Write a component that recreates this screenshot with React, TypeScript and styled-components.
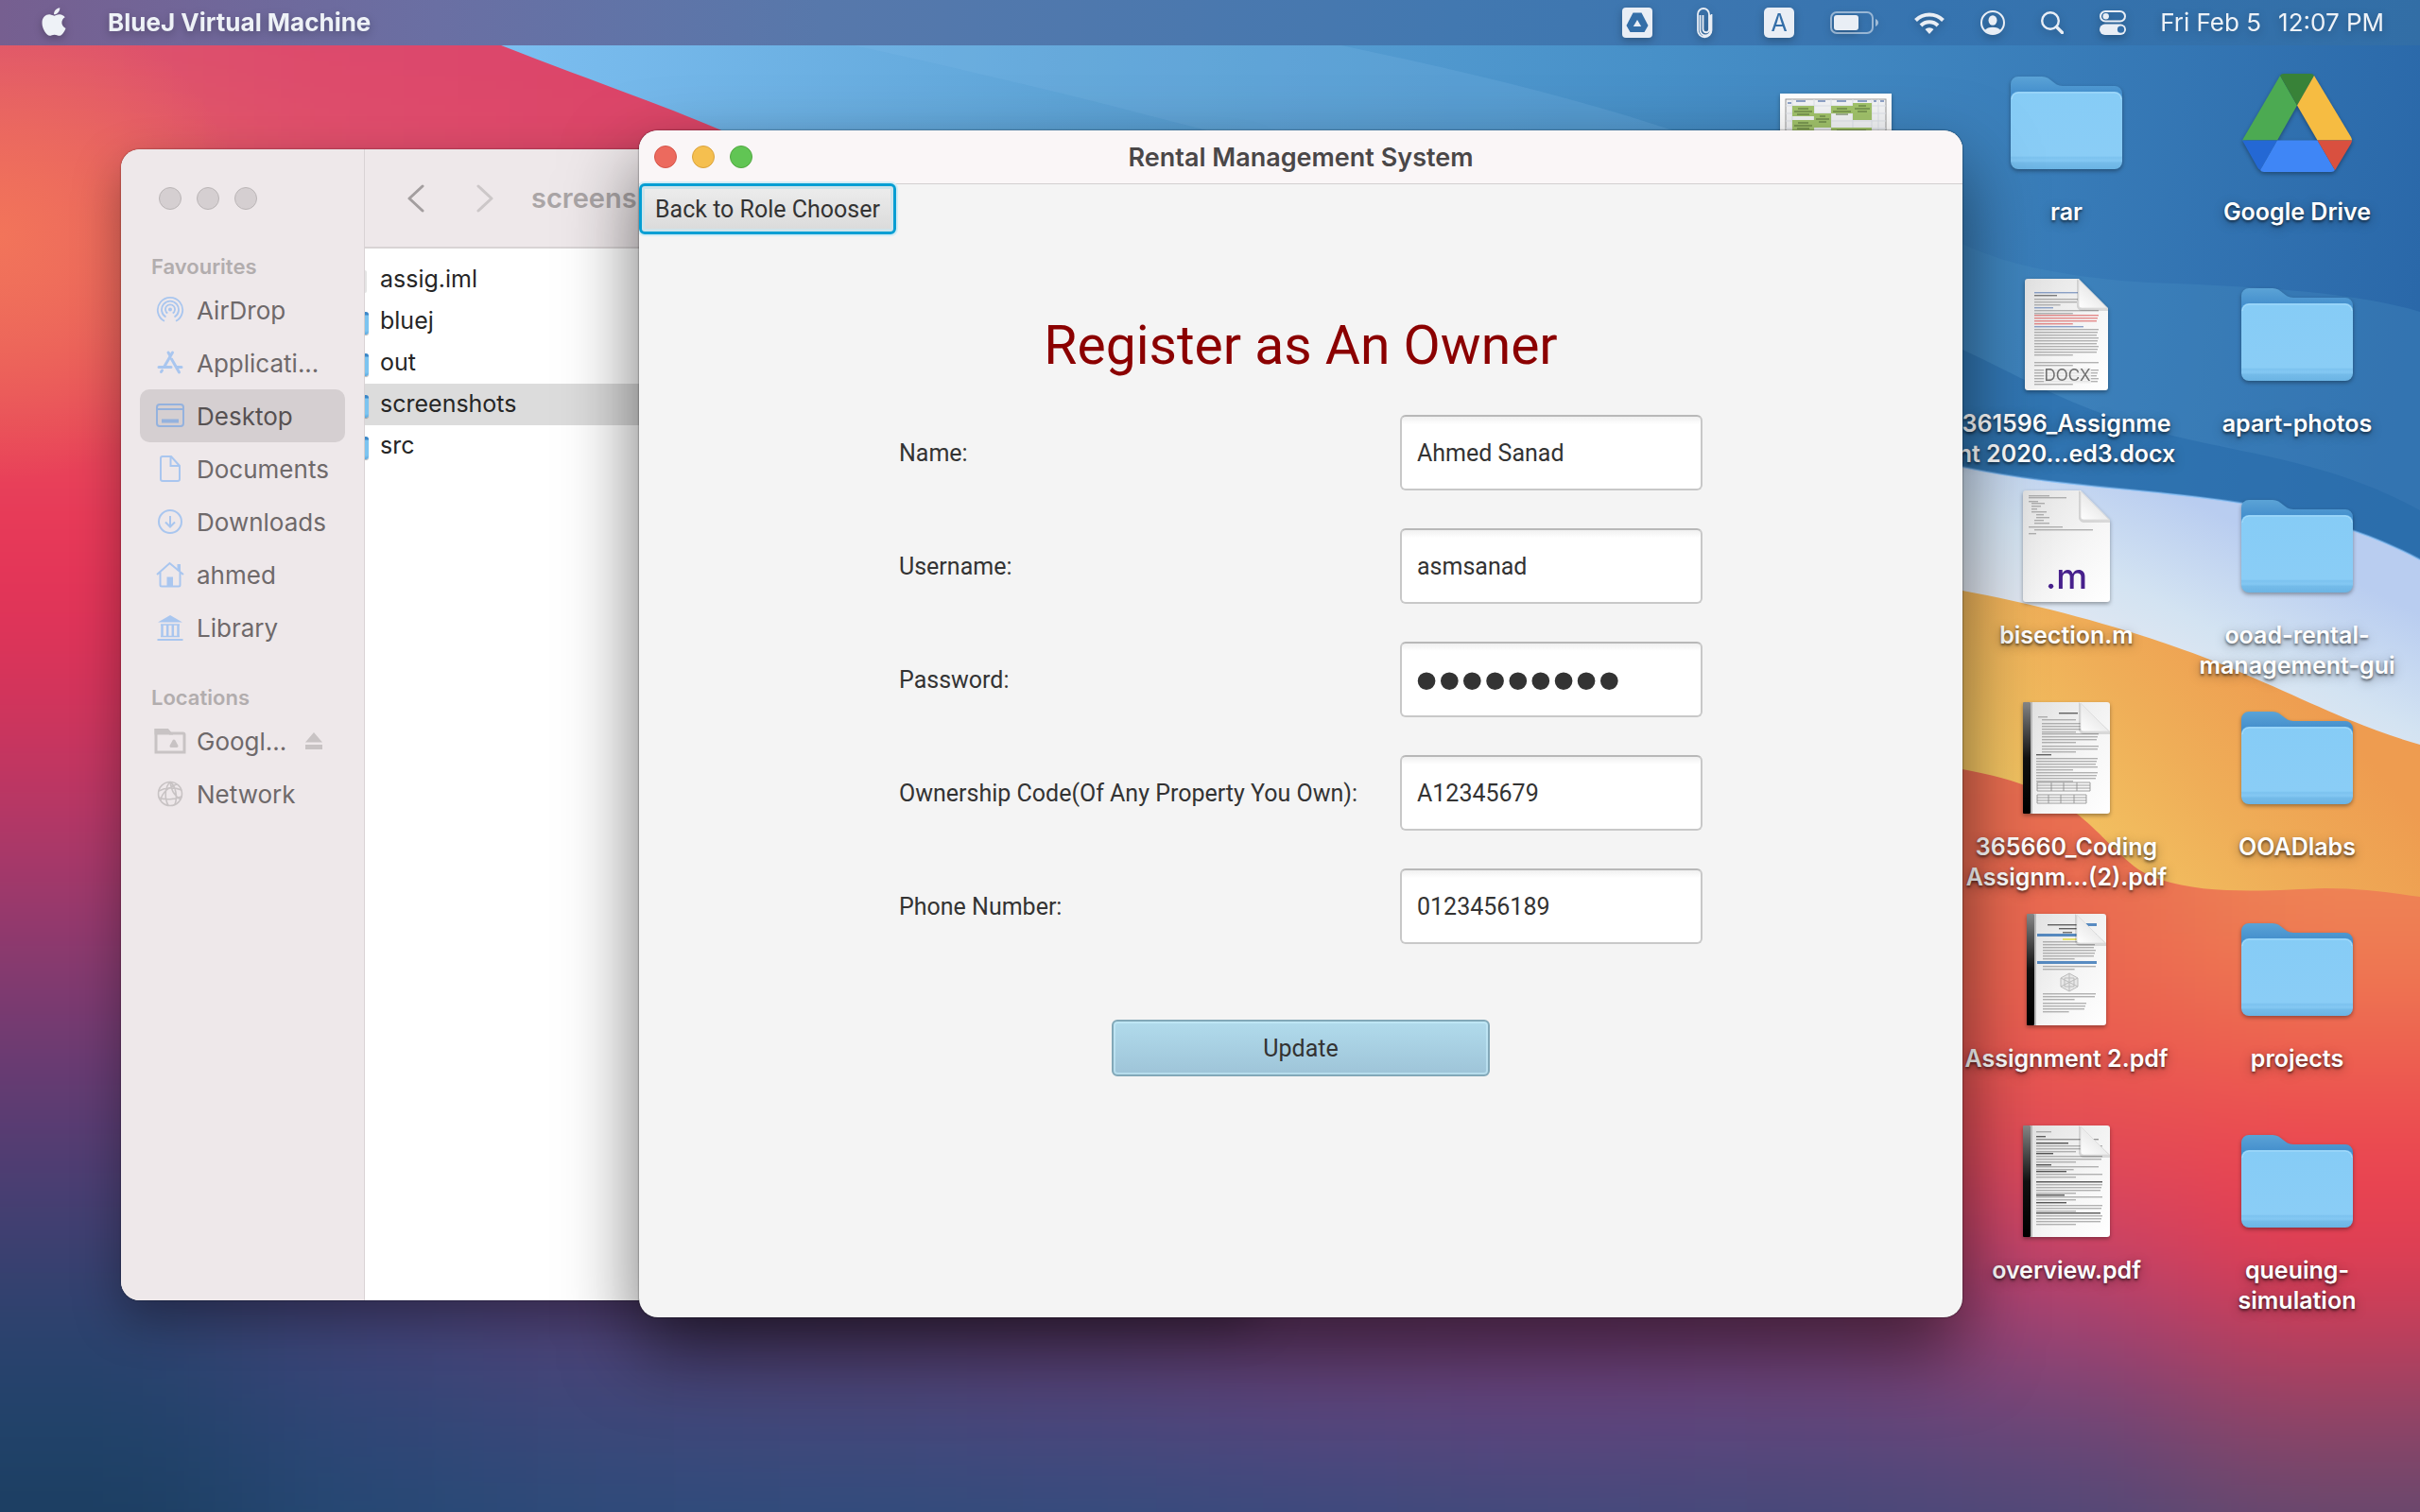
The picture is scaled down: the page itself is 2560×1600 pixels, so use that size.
import React from "react";
import styled, { createGlobalStyle, css } from "styled-components";
import { FaApple } from "react-icons/fa";

const GlobalStyle = createGlobalStyle`
  *, *::before, *::after { box-sizing: border-box; }
  body { margin: 0; overflow: hidden; font-family: Inter, "Liberation Sans", sans-serif; }
  button, input { font: inherit; color: inherit; }
  ul { list-style: none; margin: 0; padding: 0; }
  h1, h2, p { margin: 0; font-size: inherit; font-weight: inherit; }
  a { color: inherit; text-decoration: none; }
`;

/* ---------- Wallpaper ---------- */

const MESH = [
  ["#dc506e", "#dc486c", "#dc446a", "#dc446a", "#d84468", "#d84468", "#d84468", "#d84468", "#d84468", "#d84468"],
  ["#e8665c", "#e0526a", "#dc4a66", "#d84660", "#d84660", "#d84660", "#d84660", "#d84660", "#d84660", "#d84660"],
  ["#e6525a", "#e04a5c", "#d84660", "#d84660", "#d84660", "#d84660", "#d84660", "#d84660", "#d84660", "#d84660"],
  ["#ea3558", "#e03a5a", "#d84660", "#d84660", "#d84660", "#d84660", "#d84660", "#d84660", "#e87050", "#ea8055"],
  ["#d83358", "#d83a5a", "#d84660", "#d84660", "#d84660", "#d84660", "#d84660", "#e86a50", "#e87050", "#ea8055"],
  ["#b03868", "#b83860", "#c03860", "#c84060", "#d84660", "#d84660", "#d84660", "#e86a50", "#e86c50", "#ee8a58"],
  ["#803a70", "#803a70", "#8c3a70", "#a03a68", "#b03c68", "#c84060", "#d84660", "#e86450", "#ea6650", "#ee7850"],
  ["#553c74", "#603c72", "#703c70", "#803c70", "#903c70", "#a03c70", "#b84068", "#d84858", "#e84a50", "#ec4650"],
  ["#33416f", "#4a3f74", "#5a3e74", "#683c70", "#743c70", "#883c74", "#8c3c78", "#983f7c", "#c03f70", "#e43a52"],
  ["#20446c", "#2f4678", "#3c487a", "#42487c", "#4a477e", "#54467e", "#5c457e", "#5c467c", "#684678", "#8c4468"],
  ["#1a3b5c", "#214a72", "#264c7a", "#284e7c", "#2a4e7c", "#304c7c", "#364c7a", "#3c4a78", "#444a78", "#544a70"],
];

const WallpaperSvg = styled.svg`
  position: absolute;
  inset: 0;
  width: 100%;
  height: 100%;
  z-index: -1;
`;

function Wallpaper() {
  return (
    <WallpaperSvg viewBox="0 0 2560 1600" preserveAspectRatio="xMidYMid slice" aria-hidden="true">
      <defs>
        <filter id="soft" x="-20%" y="-20%" width="140%" height="140%" colorInterpolationFilters="sRGB">
          <feGaussianBlur stdDeviation="85" />
        </filter>
        <linearGradient id="sky" x1="500" y1="0" x2="2560" y2="300" gradientUnits="userSpaceOnUse">
          <stop offset="0" stopColor="#7ec0f2" />
          <stop offset="0.3" stopColor="#5fa5d8" />
          <stop offset="0.6" stopColor="#4790c8" />
          <stop offset="0.8" stopColor="#397db9" />
          <stop offset="1" stopColor="#2a68a9" />
        </linearGradient>
        <linearGradient id="lav" x1="2300" y1="520" x2="2200" y2="720" gradientUnits="userSpaceOnUse">
          <stop offset="0" stopColor="#b9cdf0" />
          <stop offset="0.5" stopColor="#d3e3f2" />
          <stop offset="1" stopColor="#e8eaf2" />
        </linearGradient>
        <linearGradient id="sun" x1="2180" y1="900" x2="2420" y2="700" gradientUnits="userSpaceOnUse">
          <stop offset="0" stopColor="#f3c462" />
          <stop offset="0.5" stopColor="#efae58" />
          <stop offset="1" stopColor="#ee9c50" />
        </linearGradient>
        <radialGradient id="glow" cx="0" cy="250" r="260" gradientUnits="userSpaceOnUse">
          <stop offset="0" stopColor="#f2745a" />
          <stop offset="1" stopColor="#f2745a" stopOpacity="0" />
        </radialGradient>
      </defs>
      <g filter="url(#soft)">
        {MESH.map((row, r) =>
          row.map((fill, c) => (
            <rect
              key={`${r}-${c}`}
              x={c === 0 ? -400 : c * 256}
              y={r === 0 ? -300 : r * 160 - (r > 8 ? 20 : 0)}
              width={c === 0 || c === 9 ? 660 : 260}
              height={r === 0 || r === 10 ? 484 : 164}
              fill={fill}
            />
          ))
        )}
      </g>
      <rect width="400" height="560" fill="url(#glow)" />
      <path d="M1900 780C2000 800 2060 808 2076 814C2200 836 2210 880 2262 920C2310 950 2400 942 2460 940C2500 940 2530 945 2560 949V560H1900Z" fill="url(#sun)" />
      <path d="M1900 590C2000 610 2060 620 2076 625C2160 640 2260 668 2330 695C2420 730 2480 765 2560 788V420H1900Z" fill="url(#lav)" />
      <path d="M500 36C620 84 700 110 768 140C1100 290 1500 420 2076 494C2180 516 2270 516 2370 532C2450 545 2510 565 2560 592V0H500Z" fill="url(#sky)" />
      <path d="M2076 494C2180 516 2270 516 2370 532C2450 545 2510 565 2560 592" fill="none" stroke="#8cc0f4" strokeWidth="2" />
      <path d="M820 30C1100 90 1400 160 1800 300L2000 240C1850 150 1650 95 1380 40V30Z" fill="#7fbcea" opacity="0.22" />
      <path d="M2076 258C2130 285 2220 298 2300 300C2420 305 2500 312 2560 330V592C2510 565 2450 545 2370 532C2270 516 2180 516 2076 494Z" fill="#4b92c6" opacity="0.28" />
      <path d="M2076 370C2130 395 2180 425 2260 450C2350 480 2450 480 2560 540V592C2510 565 2450 545 2370 532C2270 516 2180 516 2076 494Z" fill="#2467a8" opacity="0.5" />
    </WallpaperSvg>
  );
}

/* ---------- Menu bar ---------- */

const MenuBar = styled.header`
  display: flex;
  align-items: center;
  height: 48px;
  padding: 0 38px 2px 40px;
  color: #eef2f7;
  font-size: 26px;
  background: linear-gradient(90deg, #765f90 0%, #6a6fa3 18%, #5778ab 34%, #4278b0 60%, #3674b0 80%, #326ea6 100%);
  svg, span, strong { filter: drop-shadow(0 3px 4px rgba(0, 0, 0, 0.25)); }
`;
const AppName = styled.strong`
  margin-left: 40px;
  font-weight: 700;
`;
const AppleButton = styled.button`
  display: flex;
  width: 34px;
  justify-content: center;
  padding: 0;
  border: 0;
  background: none;
`;
const Tray = styled.div`
  display: flex;
  align-items: center;
  gap: 38px;
  margin-left: auto;
  padding-top: 2px;
  svg { display: block; }
`;
const Clock = styled.div`
  display: flex;
  gap: 18px;
  margin-left: 36px;
`;

function TrayIcons() {
  const c = "#e9eef5";
  return (
    <Tray>
      <svg width="32" height="32" viewBox="0 0 32 32">
        <rect width="32" height="32" rx="4" fill={c} />
        <path d="M11.500 5.500h9L27.500 19l-4 7h-15l-4-7z" fill="#336ea8" />
        <path d="M16 13l4.200 7h-8.400z" fill={c} />
      </svg>
      <svg width="42" height="34" viewBox="6 0 42 34" fill="none" stroke={c} strokeWidth="1.800">
        <path d="M18.500 9v16a5.500 5.500 0 0 0 11 0V9M30.500 8v17a7.200 7.200 0 0 1-14.500 0V8a6 6 0 0 1 12 0v16a3 3 0 0 1-6.500 0V9" />
      </svg>
      <svg width="32" height="32" viewBox="0 0 32 32">
        <rect width="32" height="32" rx="5" fill={c} />
        <text x="16" y="25" textAnchor="middle" fontSize="25" fontFamily="Inter, sans-serif" fill="#336ea8">A</text>
      </svg>
      <svg width="51" height="24" viewBox="0 0 51 24">
        <rect x="1" y="1" width="44" height="22" rx="6" fill="none" stroke={c} strokeOpacity="0.55" strokeWidth="2" />
        <rect x="4" y="4" width="26" height="16" rx="3" fill={c} />
        <path d="M48 8c4 1.500 4 6.500 0 8z" fill={c} fillOpacity="0.6" />
      </svg>
      <svg width="32" height="24" viewBox="0 0 32 24" fill="none" stroke={c} strokeWidth="4">
        <path d="M1.500 9.500a20.500 20.500 0 0 1 29 0" />
        <path d="M7 15a12.700 12.700 0 0 1 18 0" />
        <path d="M11.500 19a6.400 6.400 0 0 1 9 0L16 24z" fill={c} stroke="none" />
      </svg>
      <svg width="26" height="26" viewBox="0 0 26 26">
        <circle cx="13" cy="13" r="12" fill="none" stroke={c} strokeWidth="2" />
        <ellipse cx="13" cy="10.500" rx="4.500" ry="5.200" fill={c} />
        <path d="M4.500 21c3-4.500 14-4.500 17 0a12 12 0 0 1-17 0z" fill={c} />
      </svg>
      <svg width="24" height="24" viewBox="0 0 24 24" fill="none" stroke={c}>
        <circle cx="10" cy="10" r="8.800" strokeWidth="2.400" />
        <path d="M16.500 16.500l6 6" strokeWidth="3.400" strokeLinecap="round" />
      </svg>
      <svg width="28" height="26" viewBox="0 0 28 26">
        <rect x="1" y="1" width="26" height="10.500" rx="5.250" fill="none" stroke={c} strokeWidth="2" />
        <circle cx="6.700" cy="6.200" r="3.200" fill={c} />
        <rect y="14.500" width="28" height="11.500" rx="5.750" fill={c} />
        <circle cx="22.500" cy="20.200" r="3.600" fill="#336ea8" />
      </svg>
    </Tray>
  );
}

/* ---------- Desktop icons ---------- */

const Screen = styled.div`
  position: relative;
  z-index: 0;
  min-height: 100vh;
  overflow: hidden;
`;
const IconGrid = styled.main`
  display: flex;
  justify-content: flex-end;
  padding: 18px 8px 0 0;
`;
const IconColumn = styled.ul`
  width: 244px;
`;
const IconItem = styled.li`
  display: flex;
  flex-direction: column;
  align-items: center;
  height: 224px;
`;
const IconArt = styled.div`
  display: flex;
  align-items: center;
  justify-content: center;
  width: 128px;
  height: 128px;
  margin-bottom: 14px;
  svg { display: block; filter: drop-shadow(0 2px 2px rgba(0, 0, 0, 0.35)); }
`;
const IconLabel = styled.span`
  color: #fff;
  font-size: 25px;
  font-weight: 600;
  line-height: 32px;
  text-align: center;
  white-space: pre;
  text-shadow: 0 2px 3px rgba(0, 0, 0, 0.55), 0 3px 12px rgba(0, 0, 0, 0.35);
`;

const Folder = () => (
  <svg width="118" height="98" viewBox="0 0 118 98">
    <defs>
      <linearGradient id="back" x1="0" y1="0" x2="0" y2="1">
        <stop offset="0" stopColor="#5ba3d6" />
        <stop offset="1" stopColor="#2f7cc4" />
      </linearGradient>
      <linearGradient id="front" x1="0" y1="0" x2="0" y2="1">
        <stop offset="0" stopColor="#86ccf6" />
        <stop offset="0.830" stopColor="#8acdf6" />
        <stop offset="0.850" stopColor="#7cc2ef" />
        <stop offset="0.890" stopColor="#84c8f3" />
        <stop offset="0.920" stopColor="#74bbe9" />
        <stop offset="1" stopColor="#6bb4e4" />
      </linearGradient>
    </defs>
    <path d="M0 8a8 8 0 0 1 8-8h25c10 0 12 10 22 10h55a8 8 0 0 1 8 8v16H0z" fill="url(#back)" />
    <path d="M0 32V24a8 8 0 0 1 8-8h102a8 8 0 0 1 8 8v66a8 8 0 0 1-8 8H8a8 8 0 0 1-8-8z" fill="url(#front)" />
    <path d="M1 24a8 8 0 0 1 7-7h102a8 8 0 0 1 7 7" fill="none" stroke="#a8dcfb" strokeWidth="1" />
  </svg>
);

const DriveLogo = () => (
  <svg width="116" height="104" viewBox="0 0 116 104">
    <path d="M40 2L58 33.500 37 70.500H0z" fill="#4caa52" />
    <path d="M40 2Q41 0 44 0H72Q75 0 76 2L58 33.500z" fill="#388238" />
    <path d="M76 2L115 67Q116 69 116 70.500H79.500L58 33.500z" fill="#f6bc42" />
    <path d="M0 70.500H37L19 102Q17 101 16 99z" fill="#2468d4" />
    <path d="M37 70.500H79.500L98 102Q97 104 94 104H23Q20 104 19 102z" fill="#3f86f6" />
    <path d="M79.500 70.500H116Q116 72 115 74L100 99Q99 101 98 102z" fill="#d9503f" />
  </svg>
);

type Line = { y: number; x?: number; w: number; c?: string; h?: number };
const block = (from: number, count: number, w: number, c?: string, x?: number): Line[] =>
  Array.from({ length: count }, (_, i) => ({ y: from + i * 3, w: i === count - 1 ? w * 0.6 : w - (i % 3), c, x }));

const DOCS: Record<string, { width: number; bound?: boolean; lines: Line[] }> = {
  docx: {
    width: 88,
    lines: [
      { y: 14, x: 10, w: 46, c: "#6a86b8" }, { y: 17, x: 10, w: 24, c: "#555" },
      ...block(21, 3, 46), { y: 30, x: 10, w: 20, c: "#6a86b8" },
      ...block(33, 2, 68), ...block(38, 4, 68, "#d66"),
      { y: 50, x: 10, w: 52, c: "#6a86b8" }, ...block(53, 10, 68), ...block(88, 2, 68),
      ...block(96, 6, 68),
    ],
  },
  m: {
    width: 92,
    lines: [
      { y: 5, x: 6, w: 22 }, { y: 7, x: 6, w: 40 }, { y: 11, x: 6, w: 10 }, { y: 13, x: 9, w: 14 },
      { y: 16, x: 9, w: 10 }, { y: 19, x: 9, w: 6 }, { y: 22, x: 9, w: 16 }, { y: 25, x: 14, w: 8 },
      { y: 28, x: 14, w: 14 }, { y: 31, x: 12, w: 10 }, { y: 34, x: 12, w: 16 }, { y: 38, x: 6, w: 36 },
      { y: 41, x: 12, w: 62 }, { y: 45, x: 6, w: 8 },
    ],
  },
  coding: {
    width: 92, bound: true,
    lines: [
      { y: 11, x: 38, w: 20, c: "#333" }, { y: 15, x: 16, w: 10 }, ...block(18, 1, 60, undefined, 20), ...block(22, 4, 60, undefined, 20),
      ...block(33, 4, 60, undefined, 20), ...block(46, 3, 60, undefined, 20), { y: 55, x: 14, w: 16, c: "#333" },
      ...block(59, 5, 65, undefined, 14), ...block(74, 4, 65, undefined, 14),
    ],
  },
  assignment: {
    width: 84, bound: true,
    lines: [
      { y: 11, x: 22, w: 34, c: "#333" }, { y: 15, x: 34, w: 20, c: "#333" }, { y: 10, x: 60, w: 14, c: "#2468b0", h: 3 },
      { y: 19, x: 38, w: 10, c: "#444" }, { y: 21, x: 11, w: 63, c: "#2468b0", h: 3 }, { y: 26, x: 38, w: 16, c: "#e4de40", h: 2 },
      ...block(29, 7, 56, undefined, 17), { y: 50, x: 11, w: 63, c: "#2468b0", h: 3 }, ...block(55, 2, 56, undefined, 17),
      ...block(84, 3, 56, undefined, 17), ...block(94, 4, 46, undefined, 17),
    ],
  },
  overview: {
    width: 92, bound: true,
    lines: [
      { y: 6, x: 14, w: 16 }, { y: 11, x: 14, w: 10, c: "#333" }, { y: 14, x: 14, w: 66, c: "#777" },
      { y: 18, x: 14, w: 34, c: "#222" }, ...block(21, 3, 70, undefined, 14), { y: 29, x: 14, w: 18, c: "#222" },
      ...block(32, 3, 70, undefined, 14), { y: 41, x: 14, w: 16, c: "#222" }, ...block(43, 2, 66, undefined, 14),
      { y: 48, x: 14, w: 32, c: "#222" }, ...block(51, 2, 70, undefined, 14), { y: 59, x: 14, w: 70, c: "#222" },
      ...block(62, 4, 70, undefined, 14), { y: 73, x: 14, w: 30, c: "#222" }, ...block(75, 2, 70, undefined, 14),
      { y: 81, x: 14, w: 32, c: "#222" }, ...block(84, 3, 70, undefined, 14), { y: 92, x: 14, w: 68, c: "#222" },
      ...block(95, 4, 70, undefined, 14),
    ],
  },
};

function DocIcon({ kind }: { kind: keyof typeof DOCS }) {
  const { width: w, bound, lines } = DOCS[kind];
  const fold = 31;
  const paper = bound
    ? `M2 0H${w - 3}Q${w} 0 ${w} 3V115Q${w} 118 ${w - 3} 118H2Z`
    : `M3 0H${w - fold}L${w} ${fold}V115Q${w} 118 ${w - 3} 118H3Q0 118 0 115V3Q0 0 3 0Z`;
  return (
    <svg width={w} height="118" viewBox={`0 0 ${w} 118`}>
      <defs>
        <linearGradient id="paper" x1="0" y1="0" x2="1" y2="1">
          <stop offset="0" stopColor="#e2e2e2" />
          <stop offset="0.600" stopColor="#f6f6f6" />
          <stop offset="1" stopColor="#fff" />
        </linearGradient>
        <linearGradient id="curl" x1="0" y1="1" x2="0.600" y2="0.300">
          <stop offset="0" stopColor="#fff" />
          <stop offset="1" stopColor="#e6e6e6" />
        </linearGradient>
        <linearGradient id="spine" x1="0" y1="0" x2="0" y2="1">
          <stop offset="0" stopColor="#888" />
          <stop offset="0.500" stopColor="#111" />
          <stop offset="1" stopColor="#000" />
        </linearGradient>
      </defs>
      <path d={paper} fill="url(#paper)" />
      {lines.map((l, i) => (
        <rect key={i} x={l.x ?? 10} y={l.y} width={l.w} height={l.h ?? 1.4} fill={l.c ?? "#9a9a9a"} opacity="0.75" />
      ))}
      {kind === "coding" && (
        <path d="M15 85h56v9H15zM15 88h56M15 91h56M30 85v9M43 85v9M57 85v9M15 98h52v9H15zM15 101h52M15 104h52M27 98v9M40 98v9M54 98v9" fill="none" stroke="#888" strokeWidth="0.800" />
      )}
      {kind === "assignment" && (
        <path d="M45 63l9 5v9l-9 5-9-5v-9zM36 68l18 9M54 68l-18 9M45 63v19M40 68h10v9h-10z" fill="#e8e8e8" stroke="#bbb" />
      )}
      {kind === "docx" && <rect x="20" y="94" width="50" height="17" fill="#f2f2f2" opacity="0.8" />}
      {kind === "docx" && (
        <text x="45" y="108" textAnchor="middle" fontSize="17" fontFamily="Inter, sans-serif" fill="#707070">DOCX</text>
      )}
      {kind === "m" && (
        <text x="46" y="104" textAnchor="middle" fontSize="37" fontWeight="500" fontFamily="Inter, sans-serif" fill="#47208c">.m</text>
      )}
      <path d={`M${w - fold - 2} 0V${fold - 1}Q${w - fold} ${fold + 3} ${w - fold + 3} ${fold + 3}H${w}V${fold}Z`} fill="#000" opacity="0.12" />
      <path d={`M${w - fold} 1V${fold - 3}Q${w - fold} ${fold} ${w - fold + 3} ${fold}H${w - 1}Z`} fill="url(#curl)" stroke="#dcdcdc" strokeWidth="0.800" />
      {bound && <rect width="8" height="118" rx="1" fill="url(#spine)" />}
      {bound && <rect x="8" width="2" height="118" fill="#bbb" />}
    </svg>
  );
}

const SCHEDULE_CELLS = [
  [13, 13, 23, 11], [36, 21, 18, 15], [54, 13, 23, 8], [77, 10, 20, 18], [13, 28, 23, 18], [54, 36, 43, 10],
];
const ScheduleThumb = () => (
  <svg width="118" height="62" viewBox="0 0 118 62">
    <rect width="118" height="62" fill="#fff" />
    <rect x="6" y="6" width="106" height="50" fill="#f5f6f8" stroke="#999" />
    <path d="M13 6v50M36 6v50M54 6v50M77 6v50M97 6v50M104 6v50M6 13h106M6 21h106M6 29h106M6 37h106" stroke="#dfe3ea" />
    {SCHEDULE_CELLS.map(([x, y, w, h], i) => (
      <g key={i}>
        <rect x={x} y={y} width={w} height={h} fill="#a3c56c" />
        <path d={`M${x + 6} ${y + 3}h${w - 12}M${x + 2} ${y + 6}h${w - 4}M${x + 5} ${y + 9}h${w - 10}`} stroke="#56703a" />
      </g>
    ))}
    <path d="M17 8h10M40 8h8M60 8h10M82 8h10M99 8h3M106 8h4M8 10h4" stroke="#8fa3c8" strokeWidth="2" />
  </svg>
);

type DesktopItem = { label: string; art: React.ReactNode };
const COLUMNS: DesktopItem[][] = [
  [{ label: "", art: <ScheduleThumb /> }],
  [
    { label: "rar", art: <Folder /> },
    { label: "361596_Assignme\nnt 2020...ed3.docx", art: <DocIcon kind="docx" /> },
    { label: "bisection.m", art: <DocIcon kind="m" /> },
    { label: "365660_Coding\nAssignm...(2).pdf", art: <DocIcon kind="coding" /> },
    { label: "Assignment 2.pdf", art: <DocIcon kind="assignment" /> },
    { label: "overview.pdf", art: <DocIcon kind="overview" /> },
  ],
  [
    { label: "Google Drive", art: <DriveLogo /> },
    { label: "apart-photos", art: <Folder /> },
    { label: "ooad-rental-\nmanagement-gui", art: <Folder /> },
    { label: "OOADlabs", art: <Folder /> },
    { label: "projects", art: <Folder /> },
    { label: "queuing-\nsimulation", art: <Folder /> },
  ],
];

/* ---------- Windows ---------- */

const windowBase = css`
  position: absolute;
  overflow: hidden;
  border-radius: 20px;
`;
const Lights = styled.div`
  display: flex;
  gap: 16px;
`;
const Light = styled.button<{ $fill: string; $edge: string }>`
  width: 24px;
  height: 24px;
  padding: 0;
  border: 1px solid ${(p) => p.$edge};
  border-radius: 50%;
  background: ${(p) => p.$fill};
`;

const FinderWindow = styled.section`
  ${windowBase}
  left: 128px;
  top: 158px;
  width: 1200px;
  height: 1218px;
  display: flex;
  background: #fff;
  box-shadow: 0 0 2px rgba(0, 0, 0, 0.5), 0 20px 50px rgba(0, 0, 0, 0.35);
`;
const Sidebar = styled.nav`
  width: 258px;
  padding: 40px 20px;
  background: #eee8ea;
  border-right: 1px solid #d9d3d5;
  color: #6e696a;
  font-size: 26px;
  ${Lights} { padding-left: 20px; margin-bottom: 44px; }
`;
const SideHeading = styled.h2`
  padding-left: 12px;
  font-size: 22px;
  font-weight: 600;
  line-height: 32px;
  color: #b2adae;
  ul + & { margin-top: 30px; }
  & + ul { margin-top: 2px; }
`;
const SideLink = styled.a<{ $active?: boolean }>`
  display: flex;
  align-items: center;
  gap: 11px;
  height: 56px;
  padding-left: 15px;
  border-radius: 10px;
  ${(p) => p.$active && css`background: #d5cfd1; color: #565152;`}
  & > svg { margin-left: auto; margin-right: 24px; }
`;
const SideIcon = styled.span`
  display: flex;
  flex: none;
  justify-content: center;
  width: 34px;
`;
const FinderMain = styled.div`
  flex: 1;
`;
const FinderToolbar = styled.div`
  display: flex;
  align-items: center;
  height: 105px;
  padding-left: 42px;
  background: #eee8ea;
  border-bottom: 2px solid #d9d4d5;
  color: #aaa5a6;
  font-size: 29px;
  font-weight: 600;
`;
const NavButton = styled.button`
  display: flex;
  width: 24px;
  margin-right: 49px;
  padding: 0;
  border: 0;
  background: none;
  & + & { margin-right: 37px; }
`;
const FileList = styled.ul`
  padding-top: 11px;
`;
const FileRow = styled.li<{ $selected?: boolean }>`
  display: flex;
  align-items: center;
  gap: 12px;
  height: 44px;
  padding-bottom: 2px;
  font-size: 25px;
  color: #262626;
  background: ${(p) => (p.$selected ? "#dcdcdc" : "transparent")};
`;
const FileSliver = styled.span<{ $folder?: boolean }>`
  width: 4px;
  height: 24px;
  margin-top: 6px;
  border-radius: 0 3px 3px 0;
  ${(p) =>
    p.$folder
      ? css`background: linear-gradient(#3a86c8 0 3px, #7cc4f0 4px 20px, #5aa6dc); box-shadow: 0 1px 1px rgba(0, 0, 0, 0.3);`
      : css`width: 2px; margin-right: 2px; background: #e4e4e4;`}
`;

const sideIcon = { width: 30, height: 30, viewBox: "0 0 30 30", fill: "none", strokeWidth: 2 } as const;
const BLUE = "#a9c6ef";
const GREY = "#c8c3c4";
const SIDE_ICONS: Record<string, React.ReactNode> = {
  AirDrop: (
    <svg {...sideIcon} stroke={BLUE} strokeWidth="1.800">
      <circle cx="15" cy="14.500" r="2" fill={BLUE} stroke="none" />
      <path d="M12.300 18.500a5 5 0 1 1 5.400 0M10.500 22.500a9 9 0 1 1 9 0M9 26.800a13.200 13.200 0 1 1 12 0" />
    </svg>
  ),
  "Applicati...": (
    <svg {...sideIcon} stroke={BLUE} strokeWidth="3" strokeLinecap="round">
      <path d="M13 4l2 3.500M17.500 4L8.500 19.500M5.500 24.500l1-1.500M3 19.500h13M22 19.500h5M16.500 11l8 14" />
    </svg>
  ),
  Desktop: (
    <svg {...sideIcon} stroke="#94b2de">
      <rect x="1" y="3" width="28" height="23" rx="3" />
      <path d="M1 8h28" />
      <rect x="6" y="18.500" width="18" height="4" fill="#94b2de" stroke="none" />
    </svg>
  ),
  Documents: (
    <svg {...sideIcon} stroke={BLUE}>
      <path d="M7 2h9l9 10v14a2 2 0 0 1-2 2H7a2 2 0 0 1-2-2V4a2 2 0 0 1 2-2zM15.500 2v10H25" />
    </svg>
  ),
  Downloads: (
    <svg {...sideIcon} stroke={BLUE}>
      <circle cx="15" cy="15" r="12" />
      <path d="M15 9v11M10 15.500l5 5 5-5" />
    </svg>
  ),
  ahmed: (
    <svg {...sideIcon} stroke={BLUE}>
      <path d="M1 15L14.500 3 29 15M4.500 12v14a1.500 1.500 0 0 0 1.500 1.500h18a1.500 1.500 0 0 0 1.500-1.500V12" />
      <rect x="22.500" y="4" width="3.500" height="7" fill={BLUE} stroke="none" />
      <rect x="11.500" y="17.500" width="6.500" height="10" fill={BLUE} stroke="none" />
    </svg>
  ),
  Library: (
    <svg {...sideIcon} stroke={BLUE}>
      <path d="M2 9.500L15 2l13 7.500z" fill={BLUE} stroke="none" />
      <path d="M5 12h20M5 24.500h20" strokeWidth="1.500" />
      <path d="M6.500 12v12M12.200 12v12M17.800 12v12M23.500 12v12" strokeWidth="2.500" />
      <path d="M1.500 28h27" />
    </svg>
  ),
  "Googl...": (
    <svg {...sideIcon} width="34" viewBox="0 0 34 30" stroke={GREY} strokeWidth="3">
      <path d="M2 3.500h12l3 3.500h13.500a1.500 1.500 0 0 1 1.500 1.500V27H2z" />
      <path d="M2 3.500h12l3 3.500H2z" fill={GREY} />
      <path d="M21 15l3 5.500h-6z" strokeWidth="3" strokeLinejoin="round" />
    </svg>
  ),
  Network: (
    <svg {...sideIcon} stroke={GREY} strokeWidth="1.600">
      <circle cx="15" cy="15" r="12.500" />
      <path d="M15 2.500C9 8 9 20 13 27.500M15 2.500c6 4 8 16 5 24M3 12c7-4 17-4 24-1M3 19c7 3 17 2 24-1M15 2.500C16 10 18 16 26 21M22 5C14 7 6 14 5 22" />
    </svg>
  ),
};

const JavaWindow = styled.section`
  ${windowBase}
  left: 676px;
  top: 138px;
  width: 1400px;
  height: 1256px;
  background: #f4f4f4;
  color: #333;
  font-family: Roboto, "Liberation Sans", sans-serif;
  font-size: 25px;
  box-shadow: 0 0 2px rgba(0, 0, 0, 0.7), 0 36px 80px rgba(0, 0, 0, 0.55);
`;
const JavaTitleBar = styled.div`
  display: grid;
  grid-template-columns: 1fr auto 1fr;
  align-items: center;
  height: 56px;
  padding: 0 16px;
  background: #faf6f7;
  box-shadow: 0 1px 0 #d2cfd0;
  color: #4a4748;
  font-family: Inter, "Liberation Sans", sans-serif;
  font-size: 27px;
  font-weight: 600;
`;
const BackButton = styled.button`
  display: block;
  height: 54px;
  padding: 0 14px;
  border: 3px solid #039ed3;
  border-radius: 6px;
  background: linear-gradient(#ededed, #dadada);
  box-shadow: inset 0 0 0 3px #cfe3ea, 0 0 0 2px #d3ecf5;
`;
const Form = styled.form`
  display: grid;
  grid-template-columns: 1fr 320px;
  align-items: center;
  row-gap: 40px;
  width: 850px;
  max-width: 100%;
  margin: 80px auto 0;
`;
const FormTitle = styled.h1`
  grid-column: 1 / -1;
  margin-bottom: -5px;
  font-size: 57px;
  line-height: 76px;
  text-align: center;
  color: #8b0000;
`;
const Field = styled.input`
  width: 100%;
  height: 80px;
  padding: 0 16px;
  border: 2px solid #c8c8c8;
  border-top-color: #b8b8b8;
  border-radius: 6px;
  background: linear-gradient(#f0f0f0, #fff 8px);
  outline: none;
  &[type="password"] { font-family: "Liberation Sans", sans-serif; font-size: 69px; padding: 0 14px; }
`;
const UpdateButton = styled.button`
  grid-column: 1 / -1;
  justify-self: center;
  width: 400px;
  height: 60px;
  margin-top: 40px;
  border: 2px solid #82a8b8;
  border-radius: 6px;
  background: linear-gradient(#b1dbec, #9ec4d8);
  box-shadow: inset 0 0 0 2px rgba(200, 236, 250, 0.6);
`;

const FIELDS = [
  { id: "name", label: "Name:", value: "Ahmed Sanad" },
  { id: "username", label: "Username:", value: "asmsanad" },
  { id: "password", label: "Password:", value: "asmsanad1", type: "password" },
  { id: "code", label: "Ownership Code(Of Any Property You Own):", value: "A12345679" },
  { id: "phone", label: "Phone Number:", value: "0123456189" },
];
const FAVOURITES = ["AirDrop", "Applicati...", "Desktop", "Documents", "Downloads", "ahmed", "Library"];
const LOCATIONS = ["Googl...", "Network"];
const FILES = ["assig.iml", "bluej", "out", "screenshots", "src"];

function WindowLights({ muted }: { muted?: boolean }) {
  const set = muted
    ? [["#d5cfd1", "#bab5b6"], ["#d5cfd1", "#bab5b6"], ["#d5cfd1", "#bab5b6"]]
    : [["#ec6a5e", "#d4564b"], ["#f5bf4f", "#d9a23c"], ["#61c554", "#51a741"]];
  return (
    <Lights>
      {["Close", "Minimise", "Zoom"].map((name, i) => (
        <Light key={name} type="button" aria-label={name} $fill={set[i][0]} $edge={set[i][1]} />
      ))}
    </Lights>
  );
}

function Finder() {
  return (
    <FinderWindow>
      <Sidebar>
        <WindowLights muted />
        <div>
          <SideHeading>Favourites</SideHeading>
          <ul>
            {FAVOURITES.map((name) => (
              <li key={name}>
                <SideLink href="#" $active={name === "Desktop"}>
                  <SideIcon>{SIDE_ICONS[name]}</SideIcon>
                  {name}
                </SideLink>
              </li>
            ))}
          </ul>
          <SideHeading>Locations</SideHeading>
          <ul>
            {LOCATIONS.map((name) => (
              <li key={name}>
                <SideLink href="#">
                  <SideIcon>{SIDE_ICONS[name]}</SideIcon>
                  {name}
                  {name === "Googl..." && (
                    <svg width="18" height="18" viewBox="0 0 18 18" fill={GREY}>
                      <path d="M9 0l9 10.500H0zM0 13h18v5H0z" />
                    </svg>
                  )}
                </SideLink>
              </li>
            ))}
          </ul>
        </div>
      </Sidebar>
      <FinderMain>
        <FinderToolbar>
          <NavButton type="button" aria-label="Back">
            <svg width="24" height="30" viewBox="0 0 24 30" fill="none" stroke="#a39e9f" strokeWidth="3" strokeLinecap="round" strokeLinejoin="round">
              <path d="M19 2L5 15l14 13" />
            </svg>
          </NavButton>
          <NavButton type="button" aria-label="Forward">
            <svg width="24" height="30" viewBox="0 0 24 30" fill="none" stroke="#ccc7c8" strokeWidth="3" strokeLinecap="round" strokeLinejoin="round">
              <path d="M5 2l14 13L5 28" />
            </svg>
          </NavButton>
          screens
        </FinderToolbar>
        <FileList>
          {FILES.map((name) => (
            <FileRow key={name} $selected={name === "screenshots"}>
              <FileSliver $folder={!name.includes(".")} />
              {name}
            </FileRow>
          ))}
        </FileList>
      </FinderMain>
    </FinderWindow>
  );
}

function RentalWindow() {
  return (
    <JavaWindow>
      <JavaTitleBar>
        <WindowLights />
        <h2>Rental Management System</h2>
      </JavaTitleBar>
      <BackButton type="button">Back to Role Chooser</BackButton>
      <Form onSubmit={(e) => e.preventDefault()}>
        <FormTitle>Register as An Owner</FormTitle>
        {FIELDS.map((f) => (
          <React.Fragment key={f.id}>
            <label htmlFor={f.id}>{f.label}</label>
            <Field id={f.id} type={f.type ?? "text"} defaultValue={f.value} />
          </React.Fragment>
        ))}
        <UpdateButton type="submit">Update</UpdateButton>
      </Form>
    </JavaWindow>
  );
}

export default function App() {
  return (
    <Screen>
      <GlobalStyle />
      <Wallpaper />
      <MenuBar>
        <AppleButton type="button" aria-label="Apple menu">
          <FaApple size={34} />
        </AppleButton>
        <AppName>BlueJ Virtual Machine</AppName>
        <TrayIcons />
        <Clock>
          <span>Fri Feb 5</span>
          <span>12:07 PM</span>
        </Clock>
      </MenuBar>
      <IconGrid>
        {COLUMNS.map((items, c) => (
          <IconColumn key={c}>
            {items.map((item) => (
              <IconItem key={item.label}>
                <IconArt>{item.art}</IconArt>
                <IconLabel>{item.label}</IconLabel>
              </IconItem>
            ))}
          </IconColumn>
        ))}
      </IconGrid>
      <Finder />
      <RentalWindow />
    </Screen>
  );
}
